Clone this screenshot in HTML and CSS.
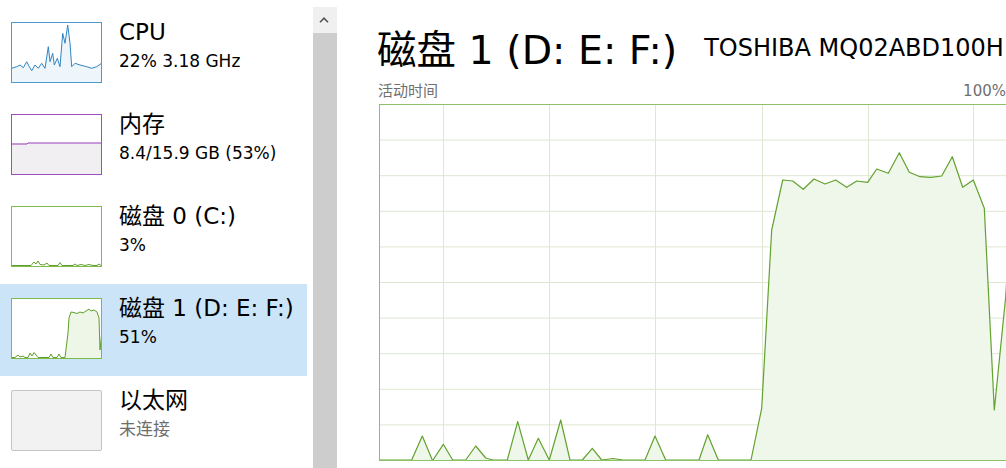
FILE: index.html
```html
<!DOCTYPE html>
<html lang="zh-CN">
<head>
<meta charset="utf-8">
<title>任务管理器 - 性能</title>
<link rel="stylesheet" href="styles.css">
</head>
<body>
<div class="app">
  <aside class="sidebar">
    <ul class="perf-list">
      <li class="perf-item">
        <svg class="thumb" viewBox="0 0 91 61" width="91" height="61">
          <polygon class="cpu-fill" points="0.7,46.3 5.7,44.7 9,43 12.3,45.7 15.7,39.7 18.3,44.7 20.7,48.7 24,43 27.3,46.3 30.7,41.3 34,46.3 37.3,24.7 39,39.7 41.7,31.3 43.3,43 46.3,36.3 49,44.7 51.7,11.3 54,21.3 56.7,3 59,21.3 60.7,44.7 64,41.3 69,43 75.7,44.7 80.7,46.3 85.7,44.7 90.5,41.3 90.5,60.5 0.5,60.5"/>
          <polyline class="cpu-line" points="0.7,46.3 5.7,44.7 9,43 12.3,45.7 15.7,39.7 18.3,44.7 20.7,48.7 24,43 27.3,46.3 30.7,41.3 34,46.3 37.3,24.7 39,39.7 41.7,31.3 43.3,43 46.3,36.3 49,44.7 51.7,11.3 54,21.3 56.7,3 59,21.3 60.7,44.7 64,41.3 69,43 75.7,44.7 80.7,46.3 85.7,44.7 90.5,41.3"/>
          <rect class="cpu-border" x="0.5" y="0.5" width="90" height="60"/>
        </svg>
        <div class="perf-text">
          <div class="perf-title">CPU</div>
          <div class="perf-sub">22% 3.18 GHz</div>
        </div>
      </li>
      <li class="perf-item">
        <svg class="thumb" viewBox="0 0 91 61" width="91" height="61">
          <rect class="mem-fill" x="0.5" y="29" width="90" height="31.5"/>
          <polyline class="mem-line" points="0.5,30 16,30 17,29 90.5,29"/>
          <rect class="mem-border" x="0.5" y="0.5" width="90" height="60"/>
        </svg>
        <div class="perf-text">
          <div class="perf-title">内存</div>
          <div class="perf-sub">8.4/15.9 GB (53%)</div>
        </div>
      </li>
      <li class="perf-item">
        <svg class="thumb" viewBox="0 0 91 61" width="91" height="61">
          <polyline class="disk-line" points="1,59.5 20,59.5 23,56 25,58 27,55 29,58.5 33,59 36,57 38,59.5 47,59.5 49,56.5 51,59.5 62,59.5 64,58 66,59.5 70,58.5 74,59.5 78,58.5 82,59.5 86,59.5 88,58 90,59.5"/>
          <rect class="disk-border" x="0.5" y="0.5" width="90" height="60"/>
        </svg>
        <div class="perf-text">
          <div class="perf-title">磁盘 0 (C:)</div>
          <div class="perf-sub">3%</div>
        </div>
      </li>
      <li class="perf-item selected">
        <svg class="thumb" viewBox="0 0 91 61" width="91" height="61">
          <polygon class="disk-fill" points="54,59.5 57,35 58,20 60,14 63,14.5 66,15.5 69,14 72,15 75,13 78,11 80,13 83,12 86,14 88,20 89,52 90.5,38 90.5,60.5 54,60.5"/>
          <polyline class="disk-line" points="1,59.5 4,59.5 7,57 9,59 12,58 14,59.5 17,59.5 19,55 21,58 23,54.5 25,57 27,59.5 38,59.5 40,56 42,59.5 46,59.5 48,56 50,59.5 54,59.5 57,35 58,20 60,14 63,14.5 66,15.5 69,14 72,15 75,13 78,11 80,13 83,12 86,14 88,20 89,52 90.5,38"/>
          <rect class="disk-border" x="0.5" y="0.5" width="90" height="60"/>
        </svg>
        <div class="perf-text">
          <div class="perf-title">磁盘 1 (D: E: F:)</div>
          <div class="perf-sub">51%</div>
        </div>
      </li>
      <li class="perf-item">
        <div class="thumb thumb-off"></div>
        <div class="perf-text">
          <div class="perf-title">以太网</div>
          <div class="perf-sub muted">未连接</div>
        </div>
      </li>
    </ul>
  </aside>

  <div class="scrollbar">
    <div class="sb-btn">
      <svg viewBox="0 0 10 6" width="10" height="6"><polyline points="1,5.2 5,1.2 9,5.2"/></svg>
    </div>
    <div class="sb-thumb"></div>
  </div>

  <main class="detail">
    <header class="detail-head">
      <h1 class="detail-title">磁盘 1 (D: E: F:)</h1>
      <span class="detail-model">TOSHIBA MQ02ABD100H</span>
    </header>
    <div class="graph-labels">
      <span>活动时间</span>
      <span>100%</span>
    </div>
    <svg class="graph" viewBox="379 104 628 357" width="628" height="357">
      <g class="grid">
        <line x1="443.5" y1="104" x2="443.5" y2="461"/>
        <line x1="549.5" y1="104" x2="549.5" y2="461"/>
        <line x1="655.5" y1="104" x2="655.5" y2="461"/>
        <line x1="762.5" y1="104" x2="762.5" y2="461"/>
        <line x1="868.5" y1="104" x2="868.5" y2="461"/>
        <line x1="973.5" y1="104" x2="973.5" y2="461"/>
        <line x1="379" y1="140.1" x2="1007" y2="140.1"/>
        <line x1="379" y1="175.7" x2="1007" y2="175.7"/>
        <line x1="379" y1="211.3" x2="1007" y2="211.3"/>
        <line x1="379" y1="246.9" x2="1007" y2="246.9"/>
        <line x1="379" y1="282.5" x2="1007" y2="282.5"/>
        <line x1="379" y1="318.1" x2="1007" y2="318.1"/>
        <line x1="379" y1="353.7" x2="1007" y2="353.7"/>
        <line x1="379" y1="389.3" x2="1007" y2="389.3"/>
        <line x1="379" y1="424.9" x2="1007" y2="424.9"/>
      </g>
      <polygon class="g-fill" points="380,460 411.7,460 422.3,436 432.3,460 433,460 443.3,444.3 452.7,460 465.7,460 475.7,446 485.7,458 493,460 507.3,460 517.7,421.7 528.3,460 538.3,438.3 549.3,460 560.7,420 570,460 582.3,460 592.3,448.3 601.7,460 613,458.5 623,460 645,460 655,436 665.7,460 699,460 707.7,434.7 718.3,460 751,460 761.7,408.3 771.7,230 782.7,180 792.7,181 803.3,189.3 814,179 825,184 835.7,180 846.7,187.3 856.7,181 867.7,182.3 876.7,169 888.3,173.3 899.3,152.7 909.3,172.3 920,176.7 930.7,177.3 941.7,176 952.3,156.7 962.7,187.3 973.3,180 984.3,208.3 994.3,410 1005.7,296.7 1008,260 1008,460"/>
      <polyline class="g-line" points="380,460 411.7,460 422.3,436 432.3,460 433,460 443.3,444.3 452.7,460 465.7,460 475.7,446 485.7,458 493,460 507.3,460 517.7,421.7 528.3,460 538.3,438.3 549.3,460 560.7,420 570,460 582.3,460 592.3,448.3 601.7,460 613,458.5 623,460 645,460 655,436 665.7,460 699,460 707.7,434.7 718.3,460 751,460 761.7,408.3 771.7,230 782.7,180 792.7,181 803.3,189.3 814,179 825,184 835.7,180 846.7,187.3 856.7,181 867.7,182.3 876.7,169 888.3,173.3 899.3,152.7 909.3,172.3 920,176.7 930.7,177.3 941.7,176 952.3,156.7 962.7,187.3 973.3,180 984.3,208.3 994.3,410 1005.7,296.7 1008,260"/>
      <rect class="g-border" x="379.5" y="104.5" width="627" height="356"/>
    </svg>
  </main>
</div>
</body>
</html>
```

FILE: styles.css
```css
html, body {
  margin: 0;
  padding: 0;
  background: #ffffff;
  overflow: hidden;
}

body {
  width: 1006px;
  height: 468px;
  font-family: "DejaVu Sans", "Noto Sans CJK SC", sans-serif;
  color: #000000;
}

.app {
  display: flex;
  height: 468px;
}

/* ---------- sidebar ---------- */
.sidebar {
  flex: none;
  width: 307px;
  padding-top: 8px;
}

.perf-list {
  list-style: none;
  margin: 0;
  padding: 0;
}

.perf-item {
  display: flex;
  align-items: flex-start;
  height: 92px;
  box-sizing: border-box;
  padding: 9px 0 0 11px;
}

.perf-item.selected {
  background: #cce4f7;
}

.thumb {
  flex: none;
  display: block;
  width: 91px;
  height: 61px;
  margin-top: 5px;
  background: #ffffff;
}

.thumb-off {
  box-sizing: border-box;
  background: #f2f2f2;
  border: 1px solid #c4c4c4;
  border-radius: 2px;
}

.cpu-fill { fill: #eef5fb; }
.cpu-line { fill: none; stroke: #2f86c2; stroke-width: 1; stroke-linejoin: round; }
.cpu-border { fill: none; stroke: #4b9bd0; stroke-width: 1; }

.mem-fill { fill: #f2eff3; }
.mem-line { fill: none; stroke: #9a3cbc; stroke-width: 1; }
.mem-border { fill: none; stroke: #a04cc2; stroke-width: 1; }

.disk-fill { fill: #eef6e7; }
.disk-line { fill: none; stroke: #5f9f2b; stroke-width: 1; stroke-linejoin: round; }
.disk-border { fill: none; stroke: #7fba4c; stroke-width: 1; }

.perf-text {
  margin-left: 17px;
  white-space: nowrap;
}

.perf-title {
  font-size: 23px;
  line-height: 30px;
}

.perf-sub {
  margin-top: 2px;
  font-size: 17px;
  line-height: 24px;
}

.perf-sub.muted {
  color: #6d6d6d;
}

/* ---------- scrollbar ---------- */
.scrollbar {
  flex: none;
  width: 24px;
  margin-left: 6px;
  padding-top: 7px;
  display: flex;
  flex-direction: column;
}

.sb-btn {
  height: 26px;
  background: #f0f0f0;
  display: flex;
  align-items: center;
  justify-content: center;
}

.sb-btn svg {
  display: block;
  margin-right: 2px;
}

.sb-btn polyline {
  fill: none;
  stroke: #555555;
  stroke-width: 1.6;
}

.sb-thumb {
  flex: 1;
  background: #cdcdcd;
}

/* ---------- detail ---------- */
.detail {
  flex: none;
  width: 680px;
  margin-left: 3px;
  padding-left: 37px;
  box-sizing: border-box;
}

.detail-head {
  display: flex;
  align-items: flex-start;
  margin-top: 27px;
  white-space: nowrap;
}

.detail-title {
  margin: 0;
  font-weight: normal;
  font-size: 39.5px;
  line-height: 46px;
}

.detail-model {
  margin-top: 6px;
  margin-left: 27px;
  font-size: 24px;
  line-height: 30px;
}

.graph-labels {
  display: flex;
  justify-content: space-between;
  width: 628px;
  margin-top: 8px;
  margin-left: 1px;
  font-size: 15px;
  line-height: 20px;
  color: #707070;
}

.graph {
  display: block;
  margin-top: 3px;
  margin-left: 2px;
}

.grid line {
  stroke: #dde8d2;
  stroke-width: 1;
}

.g-fill { fill: #eff6ea; }
.g-line { fill: none; stroke: #62a22e; stroke-width: 1.2; stroke-linejoin: round; }
.g-border { fill: none; stroke: #8cc266; stroke-width: 1; }
```
